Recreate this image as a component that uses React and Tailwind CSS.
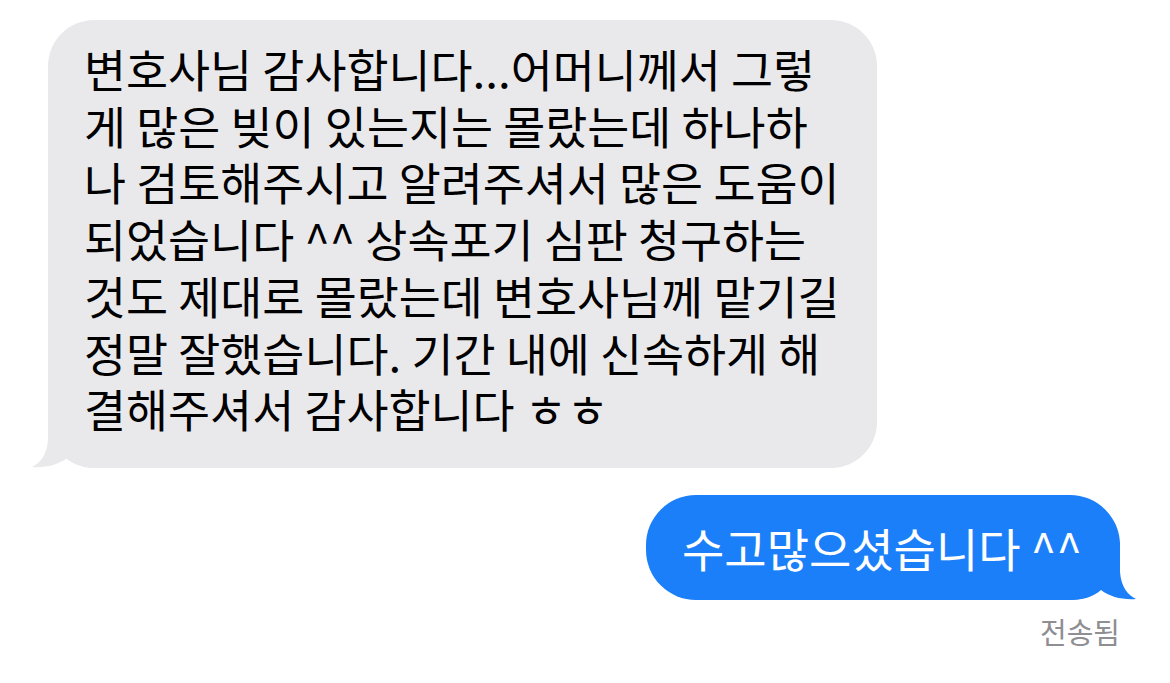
const lines = [
  "변호사님 감사합니다...어머니께서 그렇",
  "게 많은 빚이 있는지는 몰랐는데 하나하",
  "나 검토해주시고 알려주셔서 많은 도움이",
  "되었습니다 ^^ 상속포기 심판 청구하는",
  "것도 제대로 몰랐는데 변호사님께 맡기길",
  "정말 잘했습니다. 기간 내에 신속하게 해",
  "결해주셔서 감사합니다 ㅎㅎ",
];

const font = { fontFamily: '"Noto Sans CJK KR", "Noto Sans", sans-serif' };

const IncomingTail = () => (
  <svg
    className="absolute left-[-20px] bottom-0 w-[80px] h-[60px]"
    viewBox="0 0 80 60"
  >
    <path
      d="M20 2 L20 32 C19 47 12 55 4 59 C17 60 30 57 39 50 C47 57 57 60 72 60 L72 2 Z"
      fill="#e9e9eb"
    />
  </svg>
);

const OutgoingTail = () => (
  <svg
    className="absolute right-[-20px] bottom-0 w-[80px] h-[60px]"
    viewBox="0 0 80 60"
  >
    <path
      d="M60 2 L60 32 C61 47 68 55 76 59 C63 60 50 57 41 50 C33 57 23 60 8 60 L8 2 Z"
      fill="#1b7ffa"
    />
  </svg>
);

export default function App() {
  return (
    <div
      className="w-[1170px] h-[683px] bg-white flex flex-col overflow-hidden"
      style={font}
    >
      {/* received */}
      <div className="pl-[48px] pt-[20px]">
        <div className="relative w-[829px] bg-[#e9e9eb] rounded-[46px] pl-[36px] pt-[20px] pb-[31px]">
          <IncomingTail />
          <div className="relative text-[45.7px] font-normal leading-[56.7px] text-black whitespace-nowrap">
            {lines.map((l, i) => (
              <div key={i}>{l}</div>
            ))}
          </div>
        </div>
      </div>

      {/* sent */}
      <div className="flex justify-end pr-[50px] mt-[27px]">
        <div className="relative w-[474px] h-[105px] bg-[#1b7ffa] rounded-[50px] pl-[36px] flex items-center">
          <OutgoingTail />
          <span className="relative text-[46px] font-normal text-white whitespace-nowrap">
            수고많으셨습니다 ^^
          </span>
        </div>
      </div>

      <div className="flex justify-end pr-[50px] mt-[13px]">
        <span className="text-[29px] font-normal leading-[36px] text-[#8e8e93]">전송됨</span>
      </div>
    </div>
  );
}
